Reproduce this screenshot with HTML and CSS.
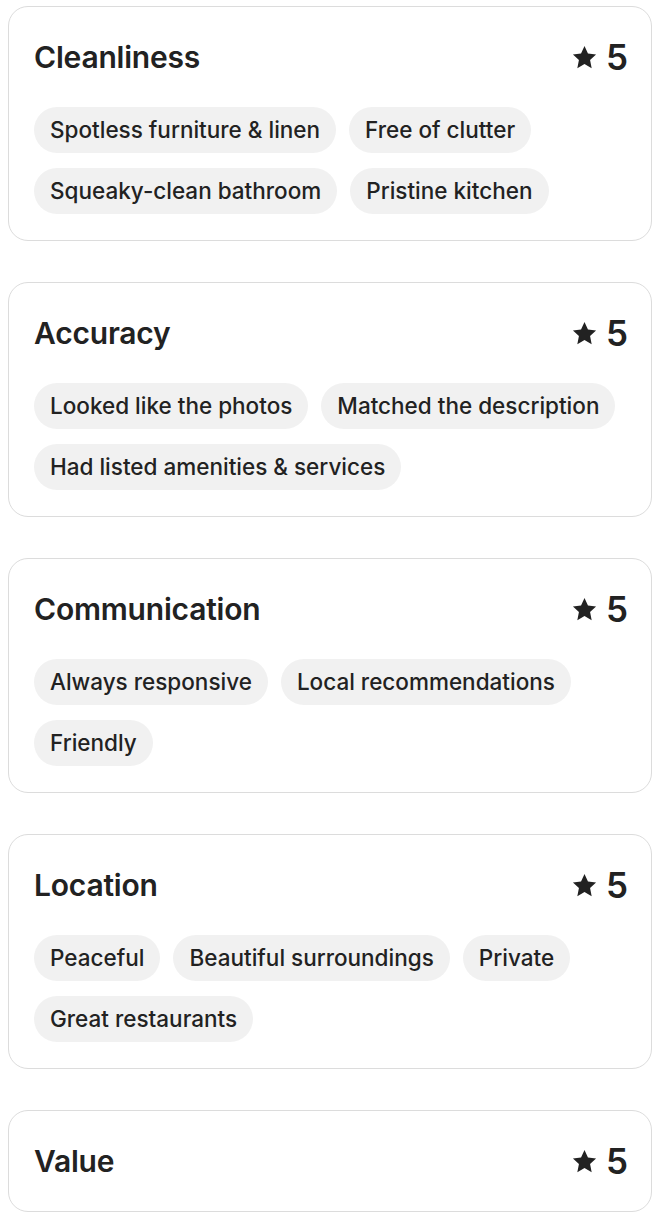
FILE: index.html
```html
<!DOCTYPE html>
<html lang="en">
<head>
    <meta charset="UTF-8">
    <meta name="viewport" content="width=device-width, initial-scale=1.0">
    <title>Guest ratings</title>
    <link rel="stylesheet" href="styles.css">
</head>
<body>
    <div class="cards">
        <section class="card">
            <div class="card-head">
                <h2>Cleanliness</h2>
                <div class="rating"><svg class="star" viewBox="0 0 32 32"><path d="M16 2.5l4.1 8.8 9.6 1.2-7.1 6.6 1.9 9.5L16 23.8l-8.5 4.8 1.9-9.5-7.1-6.6 9.6-1.2z"/></svg>5</div>
            </div>
            <div class="chips">
                <span class="chip">Spotless furniture &amp; linen</span>
                <span class="chip">Free of clutter</span>
                <span class="chip">Squeaky-clean bathroom</span>
                <span class="chip">Pristine kitchen</span>
            </div>
        </section>

        <section class="card">
            <div class="card-head">
                <h2>Accuracy</h2>
                <div class="rating"><svg class="star" viewBox="0 0 32 32"><path d="M16 2.5l4.1 8.8 9.6 1.2-7.1 6.6 1.9 9.5L16 23.8l-8.5 4.8 1.9-9.5-7.1-6.6 9.6-1.2z"/></svg>5</div>
            </div>
            <div class="chips">
                <span class="chip">Looked like the photos</span>
                <span class="chip">Matched the description</span>
                <span class="chip">Had listed amenities &amp; services</span>
            </div>
        </section>

        <section class="card">
            <div class="card-head">
                <h2>Communication</h2>
                <div class="rating"><svg class="star" viewBox="0 0 32 32"><path d="M16 2.5l4.1 8.8 9.6 1.2-7.1 6.6 1.9 9.5L16 23.8l-8.5 4.8 1.9-9.5-7.1-6.6 9.6-1.2z"/></svg>5</div>
            </div>
            <div class="chips">
                <span class="chip">Always responsive</span>
                <span class="chip">Local recommendations</span>
                <span class="chip">Friendly</span>
            </div>
        </section>

        <section class="card">
            <div class="card-head">
                <h2>Location</h2>
                <div class="rating"><svg class="star" viewBox="0 0 32 32"><path d="M16 2.5l4.1 8.8 9.6 1.2-7.1 6.6 1.9 9.5L16 23.8l-8.5 4.8 1.9-9.5-7.1-6.6 9.6-1.2z"/></svg>5</div>
            </div>
            <div class="chips">
                <span class="chip">Peaceful</span>
                <span class="chip">Beautiful surroundings</span>
                <span class="chip">Private</span>
                <span class="chip">Great restaurants</span>
            </div>
        </section>

        <section class="card">
            <div class="card-head">
                <h2>Value</h2>
                <div class="rating"><svg class="star" viewBox="0 0 32 32"><path d="M16 2.5l4.1 8.8 9.6 1.2-7.1 6.6 1.9 9.5L16 23.8l-8.5 4.8 1.9-9.5-7.1-6.6 9.6-1.2z"/></svg>5</div>
            </div>
        </section>
    </div>
</body>
</html>
```

FILE: styles.css
```css
body {
    margin: 0;
    padding: 6px 8px;
    font-family: 'Inter', 'Liberation Sans', sans-serif;
    color: #222;
    background: #fff;
}
.cards {
    display: flex;
    flex-direction: column;
    gap: 41px;
}
.card {
    border: 1.5px solid #dcdcdc;
    border-radius: 20px;
    padding: 26px 25px;
}
.card-head {
    display: flex;
    justify-content: space-between;
    align-items: center;
    height: 48px;
}
.card-head h2 {
    margin: 0;
    font-size: 30px;
    font-weight: 600;
    letter-spacing: -0.2px;
}
.rating {
    display: flex;
    align-items: center;
    gap: 8px;
    font-size: 35px;
    font-weight: 600;
    margin-right: -2px;
}
.star {
    width: 27px;
    height: 27px;
    fill: #222;
}
.chips {
    display: flex;
    flex-wrap: wrap;
    gap: 15px 13px;
    margin-top: 26px;
}
.chip {
    background: #f1f1f1;
    border-radius: 23px;
    height: 46px;
    line-height: 46px;
    padding: 0 16px;
    font-size: 22.5px;
    font-weight: 500;
}
```
